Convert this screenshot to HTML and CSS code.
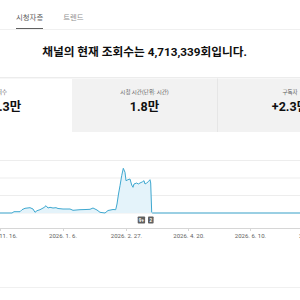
FILE: index.html
```html
<!DOCTYPE html>
<html lang="ko">
<head>
<meta charset="utf-8">
<link rel="stylesheet" href="styles.css">
</head>
<body>
<div class="page">
  <nav class="tabs">
    <div class="tab active">시청자층</div>
    <div class="tab">트렌드</div>
  </nav>
  <header class="headline">채널의 현재 조회수는 4,713,339회입니다.</header>
  <section class="cards">
    <div class="card selected">
      <div class="label">조회수</div>
      <div class="value">+14.3만</div>
    </div>
    <div class="card">
      <div class="label">시청 시간(단위: 시간)</div>
      <div class="value">1.8만</div>
    </div>
    <div class="card">
      <div class="label">구독자</div>
      <div class="value">+2.3만</div>
    </div>
  </section>
  <section class="chart">
    <svg class="chart-svg" width="300" height="155" viewBox="0 0 300 155">
      <g class="grid">
        <line x1="0" y1="28.5" x2="300" y2="28.5"/>
        <line x1="0" y1="46" x2="300" y2="46"/>
        <line x1="0" y1="63.5" x2="300" y2="63.5"/>
        <line x1="0" y1="81" x2="300" y2="81"/>
      </g>
      <polygon class="area" points="0,81 12,81 14,79.7 20,79.7 22,77.7 25,76.3 30,75.7 33,77 35,80.3 37,78.7 40,77.7 44,75.5 46,73.7 48,76 50,75.3 53,76 56,75.7 58,76.5 63,77 70,77 73,78.3 80,77.7 86,77.5 90,77.3 93,76 97,78 100,80.3 105,81 108,78.5 113,77.5 115.7,77.7 117,72 118.5,62 120,53.7 121.7,43.7 123.3,36.3 125,40.3 126,48.7 128,47.7 130,47 131.7,53 133,55.3 134,52 136.7,51 138.3,52 140,51 142.7,49.7 144,48.7 145,52 146.7,51 148.3,49.7 150,47.7 150.7,51 151.7,80.3 152.5,81"/>
      <polyline class="line" points="0,81 12,81 14,79.7 20,79.7 22,77.7 25,76.3 30,75.7 33,77 35,80.3 37,78.7 40,77.7 44,75.5 46,73.7 48,76 50,75.3 53,76 56,75.7 58,76.5 63,77 70,77 73,78.3 80,77.7 86,77.5 90,77.3 93,76 97,78 100,80.3 105,81 108,78.5 113,77.5 115.7,77.7 117,72 118.5,62 120,53.7 121.7,43.7 123.3,36.3 125,40.3 126,48.7 128,47.7 130,47 131.7,53 133,55.3 134,52 136.7,51 138.3,52 140,51 142.7,49.7 144,48.7 145,52 146.7,51 148.3,49.7 150,47.7 150.7,51 151.7,80.3 152.5,81 300,81"/>
      <g class="badges">
        <rect x="137.7" y="84.5" width="7.4" height="7" rx="0.8"/>
        <text x="141.4" y="89.7">9+</text>
        <rect x="148" y="84.5" width="5.6" height="7" rx="0.8"/>
        <text x="150.8" y="89.7">2</text>
      </g>
      <line class="axis" x1="0" y1="96.5" x2="300" y2="96.5"/>
      <g class="ticks">
        <line x1="0.5" y1="96.5" x2="0.5" y2="99"/>
        <line x1="63.5" y1="96.5" x2="63.5" y2="99"/>
        <line x1="126.5" y1="96.5" x2="126.5" y2="99"/>
        <line x1="188.5" y1="96.5" x2="188.5" y2="99"/>
        <line x1="250.5" y1="96.5" x2="250.5" y2="99"/>
      </g>
      <g class="xlabels">
        <text x="0" y="106">2025. 11. 16.</text>
        <text x="63" y="106">2026. 1. 6.</text>
        <text x="126.5" y="106">2026. 2. 27.</text>
        <text x="189" y="106">2026. 4. 20.</text>
        <text x="250.5" y="106">2026. 6. 10.</text>
        <text x="313" y="106">2026. 8. 1.</text>
      </g>
    </svg>
  </section>
</div>
</body>
</html>
```

FILE: styles.css
```css
html, body {
  margin: 0;
  padding: 0;
  background: #ffffff;
}

.page {
  width: 300px;
  height: 300px;
  overflow: hidden;
  font-family: Roboto, "Noto Sans CJK KR", sans-serif;
  color: #0f0f0f;
}

.tabs {
  display: flex;
  gap: 20px;
  padding-left: 16px;
  height: 29px;
  border-bottom: 1px solid #f0f0f0;
}

.tab {
  box-sizing: border-box;
  height: 29px;
  padding-top: 12.5px;
  font-size: 7.4px;
  line-height: 9px;
  color: #909090;
  border-bottom: 1.5px solid transparent;
}

.tab.active {
  color: #606060;
  border-bottom-color: #606060;
}

.headline {
  box-sizing: border-box;
  height: 48px;
  padding-top: 14.5px;
  padding-right: 11px;
  text-align: center;
  font-size: 11.7px;
  line-height: 15px;
  font-weight: 700;
  color: #0f0f0f;
  border-bottom: 1px solid #ececec;
}

.cards {
  display: flex;
  margin-left: -73px;
  height: 54px;
}

.card {
  box-sizing: border-box;
  flex: 0 0 145px;
  text-align: center;
  background: #f2f2f2;
  padding-top: 10px;
  border-top: 1px solid #f7f7f7;
}

.card + .card + .card {
  border-left: 1px solid #e6e6e6;
}

.card.selected {
  background: #ffffff;
}

.label {
  font-size: 5.5px;
  line-height: 7px;
  color: #606060;
}

.value {
  margin-top: 3px;
  font-size: 12.5px;
  line-height: 15px;
  font-weight: 700;
  color: #0f0f0f;
}

.chart {
  height: 155px;
  border-bottom: 1px solid #f0f0f0;
}

.chart-svg {
  display: block;
}

.grid line {
  stroke: #ededed;
  stroke-width: 1;
}

.area {
  fill: #e4f3fa;
}

.line {
  fill: none;
  stroke: #3ea8d0;
  stroke-width: 1;
  stroke-linejoin: round;
}

.axis, .ticks line {
  stroke: #d6d6d6;
  stroke-width: 1;
}

.badges rect {
  fill: #606060;
}

.badges text {
  fill: #ffffff;
  font-size: 4.6px;
  font-weight: 700;
  text-anchor: middle;
  font-family: Roboto, sans-serif;
}

.xlabels text {
  fill: #606060;
  font-size: 6px;
  text-anchor: middle;
  font-family: Roboto, sans-serif;
}
```
